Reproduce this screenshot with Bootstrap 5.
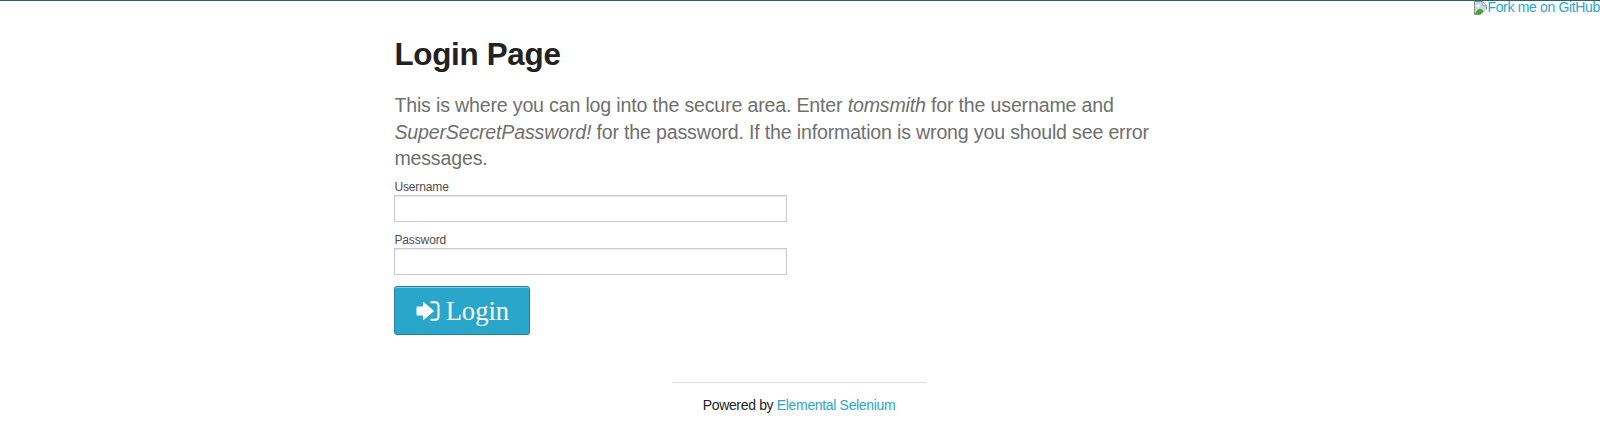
<!DOCTYPE html>
<html lang="en">
<head>
<meta charset="utf-8">
<meta name="viewport" content="width=device-width, initial-scale=1">
<title>The Internet</title>
<link rel="stylesheet" href="https://cdn.jsdelivr.net/npm/bootstrap@5.3.0/dist/css/bootstrap.min.css">
<style>
body{font-family:"Liberation Sans",Arial,sans-serif;color:#222;font-size:14px;letter-spacing:-.335px;line-height:20px;border-top:1px solid #25606c;height:428px;overflow:hidden}
a{color:#2ba6cb}
.ribbon{top:-4px;right:0}
.ribbon svg{width:13px;height:14px;margin-top:4px}
.main-col{width:768px;margin-left:394.4px;padding-top:32px}
.title{font-size:31.4px;line-height:44px;letter-spacing:-.3px}
.intro{font-size:19.6px;line-height:26.7px;letter-spacing:-.178px;color:#6f6f6f;margin-top:15px}
.form-block{padding-top:6px}
.field-label{font-size:12px;line-height:17px;letter-spacing:-.12px;color:#4d4d4d;padding-top:1px;margin-bottom:-1px}
.field-label + .field{margin-bottom:9px}
.field{width:393px;height:27px;border:1px solid #ccc;border-radius:0;padding:4px 6px;box-shadow:inset 0 1px 2px rgba(0,0,0,.1)}
.login-btn{width:136px;height:49px;background:#2ba6cb;border:1px solid #2284a1;border-radius:3px;color:#fff;font:26.6px/47px "Liberation Serif","Times New Roman",serif;letter-spacing:0;box-shadow:inset 0 1px 0 rgba(255,255,255,.4);margin-top:11px}
.login-btn svg{margin-right:6px}
.login-btn span{padding-top:2px}
.footer-col{width:254px;margin-left:672px;margin-top:47px;border-top:1px solid #ddd;padding-top:12px}
</style>
</head>
<body class="bg-white position-relative">
<a href="#" class="ribbon position-absolute d-flex text-decoration-none text-nowrap"><svg viewBox="0 0 13 14" aria-hidden="true"><path d="M.5.5h8l4 4v9H.5z" fill="#c5d8f3" stroke="#8c8c8c"/><path d="M8.5.5v4h4z" fill="#fff" stroke="#8c8c8c" stroke-width=".7"/><ellipse cx="4" cy="5" rx="2" ry="1.2" fill="#fff"/><path d="M1 13Q3 8 6 8t5 5z" fill="#45a534"/><path d="M6 14l7-6v6z" fill="#fff"/></svg><span>Fork me on GitHub</span></a>
<main class="main-col">
<h2 class="title fw-bold m-0">Login Page</h2>
<p class="intro mb-0">This is where you can log into the secure area. Enter <em>tomsmith</em> for the username and <em>SuperSecretPassword!</em> for the password. If the information is wrong you should see error messages.</p>
<form class="form-block">
<label class="field-label d-block" for="u">Username</label>
<input id="u" class="field form-control" type="text">
<label class="field-label d-block" for="p">Password</label>
<input id="p" class="field form-control" type="password">
<button class="login-btn d-flex align-items-center justify-content-center p-0" type="button"><svg width="24" height="20" viewBox="0 0 24 20" aria-hidden="true"><path d="M1.500 5.500H7V2q0-1.600 1.200-.6l9.400 8q.6.600 0 1.200l-9.400 8Q7 19.600 7 18v-3.500H1.500Q.5 14.500 .5 13.500V6.500q0-1 1-1z" fill="#fff"/><path d="M14.500 1.200H19q3.500 0 3.500 3.500v10.600q0 3.500-3.500 3.500h-4.500" fill="none" stroke="#fff" stroke-width="2"/></svg><span>Login</span></button>
</form>
</main>
<footer class="footer-col text-center">Powered by <a class="text-decoration-none" href="#">Elemental Selenium</a></footer>
<script src="https://cdn.jsdelivr.net/npm/bootstrap@5.3.0/dist/js/bootstrap.bundle.min.js"></script>
</body>
</html>
